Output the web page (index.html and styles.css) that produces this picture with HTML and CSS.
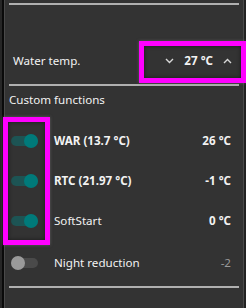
FILE: index.html
```html
<!DOCTYPE html>
<html>
<head>
<meta charset="utf-8">
<link rel="stylesheet" href="styles.css">
</head>
<body>
<div class="app">
  <div class="content">
    <div class="rule rule-top"></div>
    <div class="water">
      <div class="water-row">
        <span class="label">Water temp.</span>
        <div class="stepper">
          <svg class="chev" width="9" height="6" viewBox="0 0 9 6"><path d="M1 1 L4.5 4.5 L8 1" fill="none" stroke="#d8d8d8" stroke-width="1.4"/></svg>
          <span class="step-val">27 °C</span>
          <svg class="chev" width="9" height="6" viewBox="0 0 9 6"><path d="M1 5 L4.5 1.5 L8 5" fill="none" stroke="#d8d8d8" stroke-width="1.4"/></svg>
        </div>
      </div>
    </div>
    <div class="rule"></div>
    <div class="section-title">Custom functions</div>
    <div class="rows">
      <div class="row">
        <span class="toggle on"><span class="knob"></span></span>
        <span class="name bold">WAR (13.7 °C)</span>
        <span class="val bold">26 °C</span>
      </div>
      <div class="row">
        <span class="toggle on"><span class="knob"></span></span>
        <span class="name bold">RTC (21.97 °C)</span>
        <span class="val bold">-1 °C</span>
      </div>
      <div class="row">
        <span class="toggle on"><span class="knob"></span></span>
        <span class="name">SoftStart</span>
        <span class="val bold">0 °C</span>
      </div>
      <div class="row row-last">
        <span class="toggle off"><span class="knob"></span></span>
        <span class="name">Night reduction</span>
        <span class="val dim">-2</span>
      </div>
    </div>
    <div class="rule rule-bottom"></div>
  </div>
  <div class="highlight hl-stepper"></div>
  <div class="highlight hl-toggles"></div>
</div>
</body>
</html>
```

FILE: styles.css
```css
html, body {
  margin: 0;
  padding: 0;
  background: #333333;
}
.app {
  position: relative;
  width: 246px;
  height: 308px;
  background: #333333;
  box-shadow: inset 2px 0 #262626, inset 4px 0 #0a0a0a, inset 5px 0 #4a4a4a,
              inset -2px 0 #222222, inset -3px 0 #4a4a4a;
  font-family: "Noto Sans", "Open Sans", sans-serif;
  font-size: 11.6px;
  color: #f2f2f2;
  overflow: hidden;
}
.content {
  padding: 3px 7px 0 9px;
}
.rule {
  height: 2px;
  background: #b0b0b0;
}
.water {
  height: 79px;
  box-sizing: border-box;
  padding-top: 36px;
}
.water-row {
  height: 40px;
  display: flex;
  align-items: center;
  justify-content: space-between;
  padding: 0 7px 0 4px;
}
.label {
  line-height: 16px;
}
.stepper {
  display: flex;
  align-items: center;
}
.chev {
  display: block;
}
.step-val {
  font-weight: 700;
  margin: 0 10px;
  line-height: 16px;
}
.section-title {
  padding: 6px 0 13px 0;
  line-height: 16px;
}
.rows {
  display: flex;
  flex-direction: column;
}
.row {
  height: 40px;
  display: flex;
  align-items: center;
  padding: 0 8px 0 2px;
}
.row-last {
  padding-top: 2px;
}
.toggle {
  position: relative;
  width: 27px;
  height: 10px;
  border-radius: 5px;
  flex: none;
}
.toggle .knob {
  position: absolute;
  top: -2px;
  width: 14px;
  height: 14px;
  border-radius: 50%;
}
.toggle.on {
  background: #1d5454;
}
.toggle.on .knob {
  right: 0;
  background: #007a7a;
}
.toggle.off {
  background: #4a4a4a;
}
.toggle.off .knob {
  left: 0;
  background: #9a9a9a;
}
.name {
  margin-left: 16px;
  flex: 1;
  line-height: 16px;
}
.val {
  line-height: 16px;
}
.bold {
  font-weight: 700;
}
.dim {
  color: #9a9a9a;
}
.rule-bottom {
  margin-top: 3px;
}
.highlight {
  position: absolute;
  border: 5px solid #ff00ff;
  box-sizing: border-box;
  box-shadow: 0 0 3px rgba(120, 120, 120, 0.6), inset 0 0 4px rgba(0, 0, 0, 0.5);
}
.hl-stepper {
  left: 139px;
  top: 41px;
  width: 107px;
  height: 42px;
}
.hl-toggles {
  left: 3px;
  top: 117px;
  width: 47px;
  height: 128px;
}
```
